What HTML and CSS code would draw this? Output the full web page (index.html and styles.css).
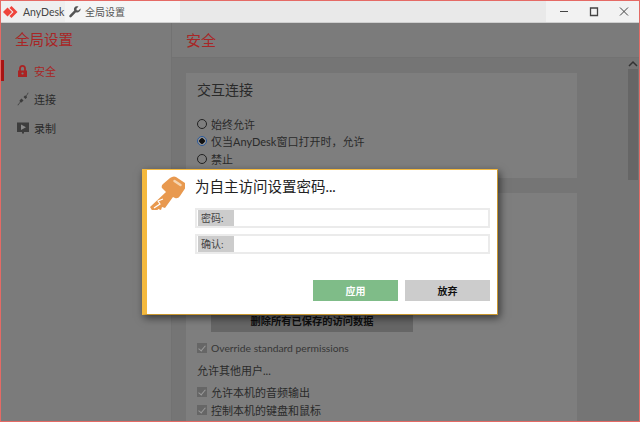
FILE: index.html
```html
<!DOCTYPE html>
<html lang="zh-CN">
<head>
  <meta charset="UTF-8" />
  <meta name="viewport" content="width=device-width, initial-scale=1" />
  <title>AnyDesk</title>
  <link rel="stylesheet" href="styles.css">
</head>
<body>
  <div class="window">
    <div class="titlebar">
      <div class="brand">
        <svg width="15" height="12" viewBox="0 0 15 12"><path fill="#ef443b" d="M0 6 4.500 1.500 9 6 4.500 10.500z"/><path fill="#ef443b" d="M8.500 0 14.500 6 8.500 12 6.500 10 10.500 6 6.500 2z"/></svg>
        <span>AnyDesk</span>
      </div>
      <div class="tab">
        <svg width="12" height="12" viewBox="0 0 12 12"><path fill="#555" d="M11.500 2.400 9.300 4.500 7.700 4.200 7.400 2.700 9.500.5C8-.1 6.300.3 5.500 1.500 4.900 2.400 4.800 3.500 5.200 4.400L.6 9.200C.1 9.700.1 10.500.6 11 1.100 11.500 1.900 11.500 2.400 11L7 6.300C8.100 6.800 9.500 6.500 10.400 5.600 11.400 4.700 11.800 3.500 11.500 2.400z"/></svg>
        <span>全局设置</span>
      </div>
      <div class="title-fill"></div>
      <div class="win-buttons">
        <svg width="12" height="12" viewBox="0 0 12 12"><path stroke="#444" d="M2 5.500H10"/></svg>
        <svg width="12" height="12" viewBox="0 0 12 12"><path fill="none" stroke="#444" stroke-width="1.300" d="M2.500 2H9.500V9.500H2.500z"/></svg>
        <svg width="12" height="12" viewBox="0 0 12 12"><path fill="none" stroke="#444" d="M2 1.500 10 9.500M10 1.500 2 9.500"/></svg>
      </div>
    </div>

    <div class="body">
      <div class="sidebar">
        <h1 class="side-title">全局设置</h1>
        <div class="side-item active">
          <svg width="14" height="14" viewBox="0 0 14 14"><path fill="none" stroke="#aa2323" stroke-width="1.800" d="M4 7V4.500C4 2.800 5.300 1.800 6.500 1.800S9 2.800 9 4.500V7"/><path fill="#aa2323" d="M2 6.500H11V13H2z"/><circle cx="6.500" cy="9.500" r="1.100" fill="#7b7b7b"/></svg>
          <span>安全</span>
        </div>
        <div class="side-item">
          <svg width="14" height="14" viewBox="0 0 14 14"><path fill="#3d3d3d" d="M1.500 13 4 10 3.500 8.500 5.500 6.500 7.500 8.500 5.500 10.500 4.500 10.300 2 13.500z"/><path fill="#3d3d3d" d="M12.500 1 10.500 4 11 5.500 9.500 7 7.500 5 9 3.500 10 3.800 12 .5z"/></svg>
          <span>连接</span>
        </div>
        <div class="side-item">
          <svg width="14" height="14" viewBox="0 0 14 14"><path fill="#3d3d3d" d="M1 1.500H13V11H8V12.500H6V11H1z"/><path fill="#8a8a8a" d="M5 3.500 10 6.300 5 9z"/></svg>
          <span>录制</span>
        </div>
      </div>

      <div class="main">
        <div class="main-head">安全</div>
        <div class="scroller">
          <div class="content">
            <section class="card first">
              <h2 class="card-title">交互连接</h2>
              <label class="option"><i class="radio"></i>始终允许</label>
              <label class="option"><i class="radio on"></i>仅当AnyDesk窗口打开时，允许</label>
              <label class="option"><i class="radio"></i>禁止</label>
            </section>
            <section class="card second">
              <div class="clear-btn">删除所有已保存的访问数据</div>
              <label class="option override"><i class="check"></i>Override standard permissions</label>
              <p class="allow-title">允许其他用户...</p>
              <label class="option"><i class="check"></i>允许本机的音频输出</label>
              <label class="option"><i class="check"></i>控制本机的键盘和鼠标</label>
            </section>
          </div>
          <div class="scrollbar">
            <svg width="10" height="8" viewBox="0 0 10 8"><path fill="none" stroke="#333" stroke-width="1.500" d="M1 6 5 2 9 6"/></svg>
            <div class="thumb"></div>
          </div>
        </div>
      </div>
    </div>

    <div class="dialog">
      <svg class="key" width="35" height="35" viewBox="5 5 35 35">
        <path fill="#e8994f" d="M27 7Q29 6 31 7L40 13Q42 15 41 17L35 26Q33 29 30 28L28 27 20 38 17 37 16 40 13 39 12 42 8 42 5 37 21 22 17 18Q16 16 18 14L25 8z"/>
        <path fill="none" stroke="#f6d5b0" stroke-width="2.500" stroke-linecap="round" d="M29.500 11 35.500 15"/>
        <path fill="none" stroke="#fff" stroke-width="1.200" d="M9 38 15 34 13 31 18 29"/>
      </svg>
      <div class="dialog-body">
        <h3 class="dialog-title">为自主访问设置密码...</h3>
        <div class="field"><span class="field-label">密码:</span></div>
        <div class="field"><span class="field-label">确认:</span></div>
        <div class="dialog-actions">
          <button class="btn apply">应用</button>
          <button class="btn discard">放弃</button>
        </div>
      </div>
    </div>
  </div>
</body>
</html>
```

FILE: styles.css
```css
* {
  box-sizing: border-box;
}
body {
  margin: 0;
  font-family: Lato, "Noto Sans CJK SC", sans-serif;
  color: #2a2a2a;
}
.window {
  position: relative;
  width: 640px;
  height: 422px;
  overflow: hidden;
  border: 1px solid #e56a65;
  display: flex;
  flex-direction: column;
  background: #7b7b7b;
}

/* title bar */
.titlebar {
  height: 22px;
  flex: none;
  display: flex;
  background: #e9e9e9;
  font-size: 10px;
  border-bottom: 1px solid #cfcfcf;
}
.brand {
  width: 64px;
  display: flex;
  align-items: center;
  gap: 5px;
  padding-left: 2px;
  background: #efefef;
  color: #444;
  font-size: 10.5px;
}
.tab {
  width: 115px;
  display: flex;
  align-items: center;
  gap: 4px;
  padding-left: 4px;
  background: #f5f5f5;
  color: #555;
}
.title-fill {
  flex: 1;
}
.win-buttons {
  width: 93px;
  background: #f2f2f2;
  display: flex;
  align-items: center;
  justify-content: space-between;
  padding: 0 9px 0 12px;
}

/* left column, colours are dimmed because the dialog is open */
.body {
  flex: 1;
  min-height: 0;
  display: flex;
}
.sidebar {
  width: 171px;
  flex: none;
  background: #7b7b7b;
  border-right: 1px solid #727272;
}
.side-title {
  margin: 7px 0 10px 14px;
  font-size: 14.5px;
  font-weight: 400;
  line-height: 20px;
  color: #a82626;
}
.side-item {
  height: 21px;
  margin-bottom: 7.5px;
  display: flex;
  align-items: center;
  gap: 4px;
  padding-left: 15px;
  font-size: 11px;
  color: #2a2a2a;
}
.side-item.active {
  color: #a82626;
  border-left: 3px solid #a81414;
  padding-left: 12px;
}

/* right column */
.main {
  flex: 1;
  min-width: 0;
  display: flex;
  flex-direction: column;
}
.main-head {
  height: 35px;
  flex: none;
  padding: 7px 0 0 14px;
  font-size: 15px;
  line-height: 20px;
  color: #a82626;
  background: #7b7b7b;
  border-bottom: 1px solid #727272;
}
.scroller {
  flex: 1;
  min-height: 0;
  display: flex;
  background: #757575;
}
.content {
  flex: 1;
  padding: 15px 51px 0 14px;
  overflow: hidden;
}
.card {
  background: #7e7e7e;
  padding: 0 11px;
}
.card.first {
  height: 105px;
  margin-bottom: 15px;
  padding-top: 7px;
}
.card.second {
  height: 260px;
  padding-top: 117px;
}
.card-title {
  margin: 0 0 15px;
  font-size: 14px;
  font-weight: 400;
  line-height: 20px;
}
.option {
  display: flex;
  align-items: center;
  gap: 4px;
  height: 17.5px;
  font-size: 11px;
  color: #2a2a2a;
}
.radio {
  width: 10px;
  height: 10px;
  border: 1px solid #222;
  border-radius: 50%;
  flex: none;
}
.radio.on {
  border-color: #2b5a9c;
  background: radial-gradient(circle, #111 0 2.5px, #929292 3px);
}
.clear-btn {
  width: 202px;
  height: 22px;
  margin-left: 14px;
  background: #666666;
  color: #0e0e0e;
  font-size: 10.25px;
  font-weight: 700;
  text-align: center;
  line-height: 22px;
}
.check {
  width: 10px;
  height: 10px;
  flex: none;
  background: #666666;
  position: relative;
}
.check::after {
  content: "";
  position: absolute;
  left: 3px;
  top: 1px;
  width: 3px;
  height: 6px;
  border: solid #9a9a9a;
  border-width: 0 1px 1px 0;
  transform: rotate(40deg);
}
.override {
  margin-top: 7px;
  font-size: 10.3px;
  color: #363636;
}
.allow-title {
  margin: 5px 0 5px;
  font-size: 11px;
  line-height: 17px;
  color: #2a2a2a;
}

.scrollbar {
  width: 10px;
  flex: none;
  margin-right: 1px;
  display: flex;
  flex-direction: column;
  align-items: center;
}
.scrollbar svg {
  margin: 2px 0 1px;
}
.thumb {
  width: 100%;
  height: 111px;
  background: #666666;
}

/* modal */
.dialog {
  position: absolute;
  left: 141px;
  top: 168px;
  width: 356px;
  height: 146px;
  background: #fff;
  border-left: 5px solid #f4b93e;
  border-top: 1px solid #f4b93e;
  border-bottom: 1px solid #c8962e;
  border-right: 1px solid #c8962e;
  box-shadow: 2px 3px 8px rgba(0, 0, 0, 0.55);
  display: flex;
}
.key {
  flex: none;
  margin: 5px 0 0 3px;
}
.dialog-body {
  flex: 1;
  padding: 7px 7px 0 10px;
}
.dialog-title {
  margin: 0 0 11px;
  font-size: 14.5px;
  font-weight: 400;
  line-height: 20px;
  color: #222;
}
.field {
  height: 20px;
  margin-bottom: 6px;
  border: 2px solid #ebebeb;
  padding: 0 0 0 1px;
}
.field-label {
  display: block;
  width: 36px;
  height: 16px;
  padding-left: 3px;
  background: #cccccc;
  font-size: 10px;
  line-height: 16px;
  color: #444;
}
.dialog-actions {
  margin-top: 26px;
  display: flex;
  gap: 7px;
  padding-left: 118px;
}
.btn {
  width: 85px;
  height: 21px;
  border: 0;
  padding: 0;
  font-family: inherit;
  font-size: 10px;
  font-weight: 700;
}
.btn.apply {
  background: #7fbc88;
  color: #fff;
}
.btn.discard {
  background: #cccccc;
  color: #111;
}
```
